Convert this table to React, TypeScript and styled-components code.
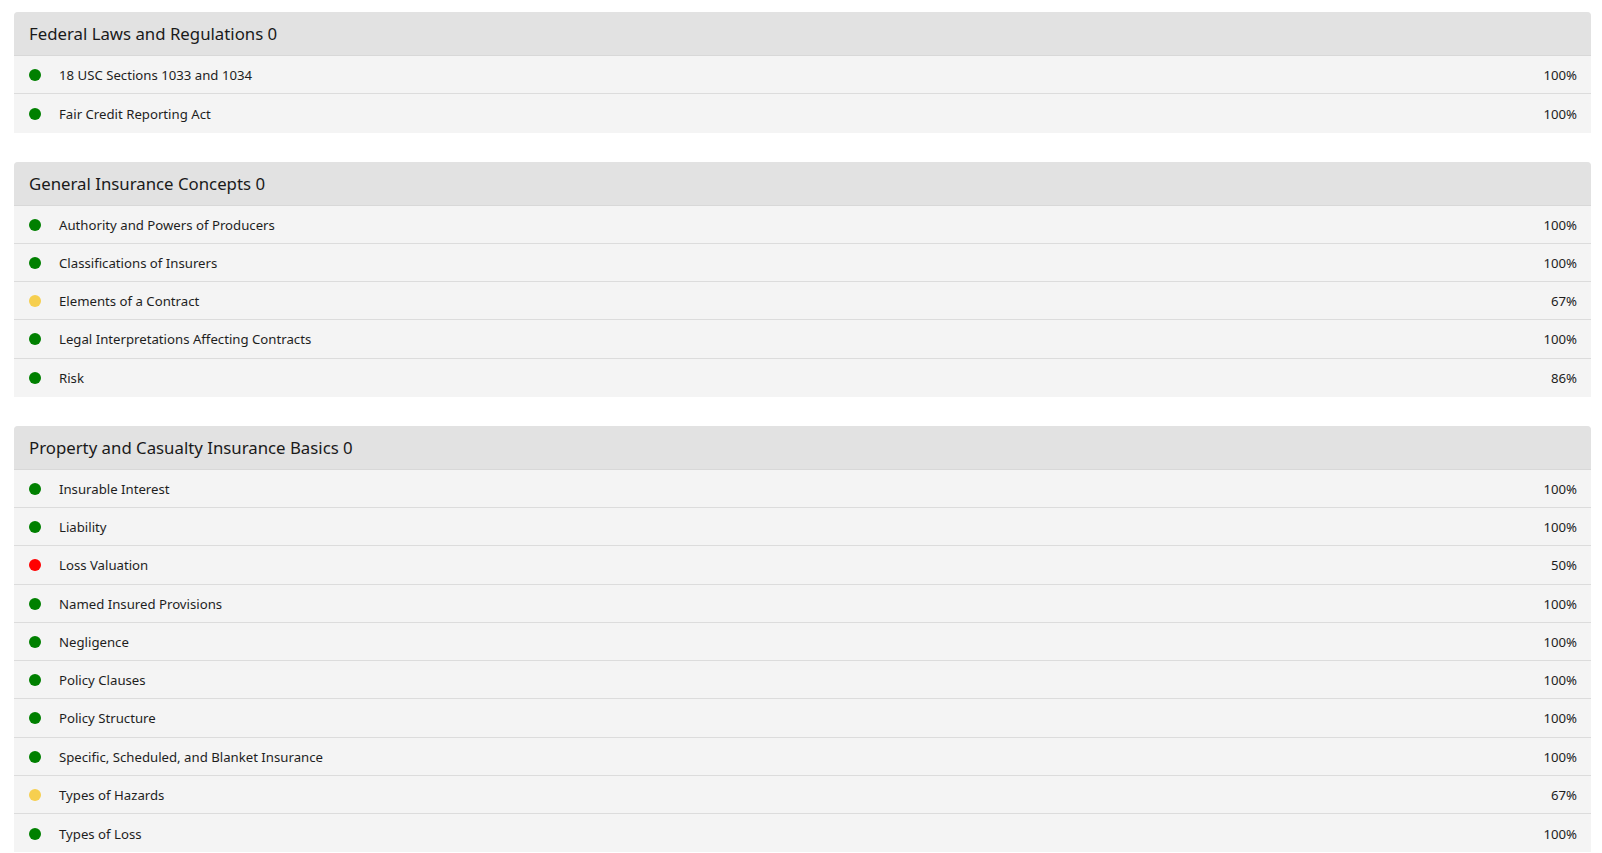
import React from "react";
import styled, { createGlobalStyle } from "styled-components";

const GlobalStyle = createGlobalStyle`
  html, body { margin: 0; padding: 0; background: #ffffff; }
  body { font-family: "Noto Sans", "Open Sans", Arial, sans-serif; color: #222; }
`;

type Level = "good" | "warn" | "bad";

interface Topic { name: string; pct: number; }
interface Section { title: string; score: number; topics: Topic[]; }

const sections: Section[] = [
  {
    title: "Federal Laws and Regulations",
    score: 0,
    topics: [
      { name: "18 USC Sections 1033 and 1034", pct: 100 },
      { name: "Fair Credit Reporting Act", pct: 100 },
    ],
  },
  {
    title: "General Insurance Concepts",
    score: 0,
    topics: [
      { name: "Authority and Powers of Producers", pct: 100 },
      { name: "Classifications of Insurers", pct: 100 },
      { name: "Elements of a Contract", pct: 67 },
      { name: "Legal Interpretations Affecting Contracts", pct: 100 },
      { name: "Risk", pct: 86 },
    ],
  },
  {
    title: "Property and Casualty Insurance Basics",
    score: 0,
    topics: [
      { name: "Insurable Interest", pct: 100 },
      { name: "Liability", pct: 100 },
      { name: "Loss Valuation", pct: 50 },
      { name: "Named Insured Provisions", pct: 100 },
      { name: "Negligence", pct: 100 },
      { name: "Policy Clauses", pct: 100 },
      { name: "Policy Structure", pct: 100 },
      { name: "Specific, Scheduled, and Blanket Insurance", pct: 100 },
      { name: "Types of Hazards", pct: 67 },
      { name: "Types of Loss", pct: 100 },
    ],
  },
];

const levelOf = (pct: number): Level => (pct >= 80 ? "good" : pct >= 60 ? "warn" : "bad");
const dotColor: Record<Level, string> = { good: "#008000", warn: "#f6cf4f", bad: "#ff0000" };

const Page = styled.div`
  display: flex;
  flex-direction: column;
  gap: 29px;
  padding: 12px 11px 0 14px;
`;

const Panel = styled.section`
  display: flex;
  flex-direction: column;
  border-radius: 4px 4px 0 0;
  overflow: hidden;
  background: #f4f4f4;
`;

const Header = styled.h2`
  margin: 0;
  height: 43px;
  display: flex;
  align-items: center;
  padding: 0 15px;
  background: #e2e2e2;
  border-bottom: 1px solid #d8d8d8;
  font-size: 16.8px;
  font-weight: 400;
  color: #1a1a1a;
`;

const Row = styled.div`
  height: 36.25px;
  display: flex;
  align-items: center;
  padding: 1px 14px 0 15px;
  background: #f4f4f4;
  border-bottom: 1px solid #dcdcdc;
  font-size: 13.2px;
  color: #1e1e1e;
  &:last-child { border-bottom: none; height: 37.25px; }
`;

const Dot = styled.span<{ $level: Level }>`
  width: 12px;
  height: 12px;
  border-radius: 50%;
  background: ${(p) => dotColor[p.$level]};
  flex: none;
  margin-right: 18px;
`;

const Name = styled.span`
  flex: 1;
`;

const Pct = styled.span`
  text-align: right;
`;

export default function App() {
  return (
    <>
      <GlobalStyle />
      <Page>
        {sections.map((s) => (
          <Panel key={s.title}>
            <Header>{s.title} {s.score}</Header>
            {s.topics.map((t) => (
              <Row key={t.name}>
                <Dot $level={levelOf(t.pct)} />
                <Name>{t.name}</Name>
                <Pct>{t.pct}%</Pct>
              </Row>
            ))}
          </Panel>
        ))}
      </Page>
    </>
  );
}
